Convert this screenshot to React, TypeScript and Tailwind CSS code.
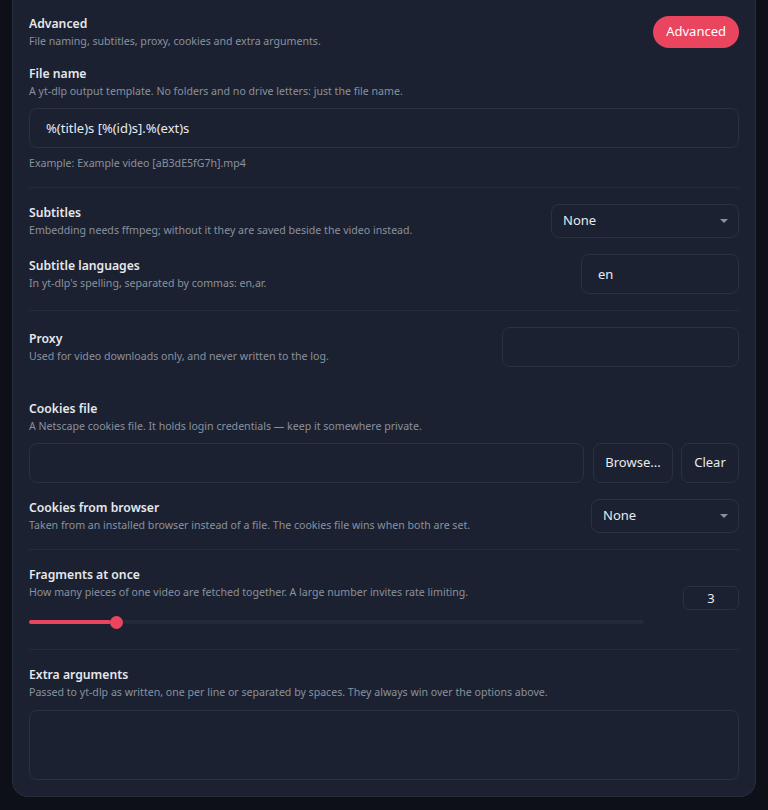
const titleCls = 'text-[12.2px] leading-[18px] font-semibold text-[#e6e8ec]';
const descCls = 'text-[10.6px] leading-[16px] text-[#8a919e]';
const fieldCls = 'h-10 rounded-lg border border-[#2a3142] bg-[#1b2130] px-4 text-[13px] text-[#e8eaee] outline-none';

function Label({ title, desc }: { title: string; desc: string }) {
  return (
    <div className="flex flex-col">
      <p className={titleCls}>{title}</p>
      <p className={descCls}>{desc}</p>
    </div>
  );
}

function Select({ value, width }: { value: string; width: string }) {
  return (
    <div className={`${width} h-[34px] flex items-center justify-between rounded-lg border border-[#2a3142] bg-[#1b2130] pl-[11px] pr-[10px] text-[13px] text-[#e8eaee]`}>
      <span>{value}</span>
      <span className="w-0 h-0 border-l-[4px] border-r-[4px] border-t-[4px] border-l-transparent border-r-transparent border-t-[#8a919e]" />
    </div>
  );
}

function Divider() {
  return <div className="h-px bg-[#252c3a]" />;
}

export default function App() {
  return (
    <div className="min-h-[810px] bg-[#0d1016] px-3 font-['Noto_Sans',sans-serif]">
      <div className="rounded-b-2xl border-x border-b border-[#262d3b] bg-[#1b2130] px-4 pt-[15px] pb-4">
        <div className="flex items-center justify-between">
          <Label title="Advanced" desc="File naming, subtitles, proxy, cookies and extra arguments." />
          <button className="h-8 rounded-full bg-[#e9455f] px-[13px] text-[13px] text-white">Advanced</button>
        </div>

        <div className="mt-4">
          <Label title="File name" desc="A yt-dlp output template. No folders and no drive letters: just the file name." />
          <input className={`${fieldCls} w-full mt-[9px]`} defaultValue="%(title)s [%(id)s].%(ext)s" />
          <p className={`${descCls} mt-[7px]`}>Example: Example video [aB3dE5fG7h].mp4</p>
        </div>

        <div className="mt-4">
          <Divider />
        </div>

        <div className="mt-4 flex flex-col gap-4">
          <div className="flex items-center justify-between">
            <Label title="Subtitles" desc="Embedding needs ffmpeg; without it they are saved beside the video instead." />
            <Select value="None" width="w-[188px]" />
          </div>
          <div className="flex items-center justify-between">
            <Label title="Subtitle languages" desc="In yt-dlp's spelling, separated by commas: en,ar." />
            <input className={`${fieldCls} w-[158px]`} defaultValue="en" />
          </div>
        </div>

        <div className="mt-4">
          <Divider />
        </div>

        <div className="mt-4 flex items-center justify-between">
          <Label title="Proxy" desc="Used for video downloads only, and never written to the log." />
          <input className={`${fieldCls} w-[237px]`} />
        </div>

        <div className="mt-[33px]">
          <Label title="Cookies file" desc="A Netscape cookies file. It holds login credentials — keep it somewhere private." />
          <div className="mt-[9px] flex gap-2">
            <input className={`${fieldCls} flex-1 mr-px`} />
            <button className="h-10 w-20 rounded-lg border border-[#2a3142] text-[13px] text-[#e8eaee]">Browse...</button>
            <button className="h-10 w-[58px] rounded-lg border border-[#2a3142] text-[13px] text-[#e8eaee]">Clear</button>
          </div>
        </div>

        <div className="mt-4 flex items-center justify-between">
          <Label title="Cookies from browser" desc="Taken from an installed browser instead of a file. The cookies file wins when both are set." />
          <Select value="None" width="w-[148px]" />
        </div>

        <div className="mt-4">
          <Divider />
        </div>

        <div className="mt-4 flex items-center gap-[39px]">
          <div className="flex-1">
            <Label title="Fragments at once" desc="How many pieces of one video are fetched together. A large number invites rate limiting." />
            <div className="mt-[15px] h-[14px] relative flex items-center">
              <div className="h-1 w-full rounded-full bg-[#232a38]" />
              <div className="absolute left-0 h-1 w-[82px] rounded-full bg-[#e9455f]" />
              <div className="absolute left-[81px] h-[13px] w-[13px] rounded-full bg-[#e9455f]" />
            </div>
          </div>
          <input className="h-6 w-14 rounded-md border border-[#2a3142] bg-[#1b2130] text-center text-[13px] text-[#e8eaee]" defaultValue="3" />
        </div>

        <div className="mt-5">
          <Divider />
        </div>

        <div className="mt-4">
          <Label title="Extra arguments" desc="Passed to yt-dlp as written, one per line or separated by spaces. They always win over the options above." />
          <textarea className="mt-[10px] block h-[70px] w-full resize-none rounded-lg border border-[#2a3142] bg-[#1b2130] outline-none" />
        </div>
      </div>
    </div>
  );
}
